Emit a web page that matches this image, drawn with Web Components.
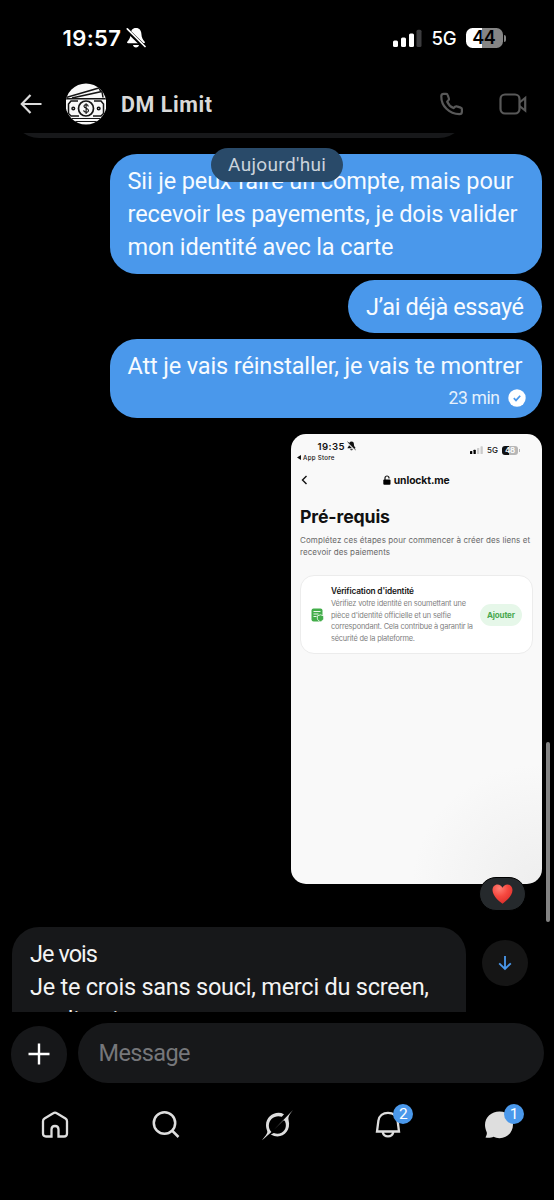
<!DOCTYPE html>
<html lang="fr">
<head>
<meta charset="utf-8">
<title>Messages</title>
<style>
html,body{margin:0;background:#000}
body{font-family:Roboto,"Noto Sans",sans-serif}
</style>
</head>
<body>
<phone-screen></phone-screen>
<script>
const define = (name, html, setup) => customElements.define(name, class extends HTMLElement {
  constructor() {
    super();
    this.attachShadow({ mode: 'open' }).innerHTML = html;
  }
  connectedCallback() { if (setup) setup(this, this.shadowRoot); }
});

/* A single line whose tracking is tuned to an advance width. */
customElements.define('fit-text', class extends HTMLElement {
  constructor() {
    super();
    this.attachShadow({ mode: 'open' }).innerHTML = `<style>:host{display:block;white-space:pre}span{display:inline-block}</style><span><slot></slot></span>`;
  }
  connectedCallback() {
    requestAnimationFrame(() => this.fit());
    this.fit();
  }
  fit() {
    const span = this.shadowRoot.querySelector('span');
    const goal = parseFloat(this.getAttribute('w'));
    const count = this.textContent.length;
    if (!goal || !count) return;
    span.style.letterSpacing = '0px';
    const natural = span.getBoundingClientRect().width;
    if (!natural) return;
    const step = (goal - natural) / (count - 1);
    span.style.letterSpacing = step + 'px';
    span.style.marginRight = -step + 'px';
  }
});

define('status-bar', `<style>
:host{display:flex;height:76px;box-sizing:border-box;align-items:center;padding:0 48.5px 0 62.500px;color:#fff;font-family:Inter,sans-serif}
.time{font-size:22px;font-weight:600;margin-top:-1px}
svg{display:block}
.bell{margin-left:5px}
.sp{flex:1}
.net{font-size:18.5px;font-weight:500;margin:0 9px 0 10px}
.bat{position:relative;width:37px;height:20px;border-radius:6.5px;background:linear-gradient(90deg,#fff 44%,#858585 44%);color:#000;font-weight:600;font-size:18px;line-height:20px;display:flex;justify-content:center;margin-top:-1px}
.nub{width:2px;height:7px;border-radius:0 3px 3px 0;background:#858585;margin-left:1px}
</style>
<fit-text class="time" w="58.5">19:57</fit-text>
<svg class="bell" width="20" height="22" viewBox="0 0 20 22"><path d="M10 1c-3.6 0-5.3 2.7-5.4 6C4.500 11 3 12.700 1.300 14.700c-.5.7-.2 1.500.8 1.500h15.800c1 0 1.300-.8.8-1.500C17 12.700 15.500 11 15.400 7 15.300 3.700 13.600 1 10 1zM7 18h6c-.3 1.600-1.400 2.500-3 2.500S7.300 19.600 7 18z" fill="#fff"/><path d="M.5 2.500 18.500 20" stroke="#000" stroke-width="4"/><path d="M1.300 1.800 19 19.500" stroke="#fff" stroke-width="1.700" stroke-linecap="round"/></svg>
<span class="sp"></span>
<svg width="29" height="19" viewBox="0 0 29 19"><g fill="#fff"><rect y="11.500" width="5" height="6.500" rx="1.500"/><rect x="8" y="8.500" width="5" height="9.500" rx="1.500"/><rect x="16" y="4.500" width="5" height="13.500" rx="1.500"/></g><rect x="23.500" y=".8" width="5" height="17.200" rx="1.500" fill="#3c3c3e"/></svg>
<fit-text class="net" w="25">5G</fit-text>
<div class="bat"><fit-text w="23.5">44</fit-text></div><div class="nub"></div>`);

define('chat-header', `<style>
:host{display:flex;height:56.5px;box-sizing:border-box;align-items:center;padding:0 27px 0 20px;color:#d9d9d9}
svg{display:block}
.av{margin-left:23.500px}
.name{font-size:21.5px;font-weight:700;margin:2px 0 0 15.500px;line-height:28px}
.sp{flex:1}
.cam{margin-left:35px}
</style>
<svg width="22" height="22" viewBox="0 0 22 22" fill="none" stroke="#dcdcdc" stroke-width="2.200"><path d="M21.500 11H2M10.500 2 1.800 11l8.700 9"/></svg>
<svg class="av" width="40" height="42" viewBox="0 0 40 42"><defs><clipPath id="c"><circle cx="20" cy="21" r="20.500"/></clipPath></defs><g clip-path="url(#c)"><rect width="40" height="42" fill="#f8f8f8"/><g fill="none" stroke="#141414" stroke-width="1.500"><path d="M0 14.500 33 5l2 4M6 15 36 8.500l1 6M0 15.800h40" /><path d="M0 35.500h40M0 38.500h40" stroke-width="1.200"/><path d="M12 18H5l-2.500 3v9.500L5 33h8M28 18h7l2.500 3v9.500L35 33h-8"/><circle cx="20" cy="25.500" r="7.500" stroke-width="1.700"/><circle cx="7.300" cy="25.500" r="1.300"/><circle cx="32.700" cy="25.500" r="1.300"/><path d="M22.300 23.500c-.3-2.600-4.600-2.300-4.300-.1.300 2.300 4.500 1.500 4.500 4 0 2.600-4.700 2.400-4.800-.1M20.100 20.200v10.800" stroke-width="1.100"/></g></g></svg>
<fit-text class="name" w="91">DM Limit</fit-text>
<span class="sp"></span>
<svg width="25" height="25" viewBox="0 0 25 25" fill="none" stroke="#585858" stroke-width="2.200" stroke-linejoin="round"><path d="M2.300 4.200C2.400 2.800 3.300 1.900 4.700 1.900h2.500c.8 0 1.300.4 1.500 1.100l1.200 3.500c.2.600 0 1.200-.4 1.600L8.200 9.700c1.300 3 3.200 5 6.300 6.400l1.700-1.400c.5-.4 1-.5 1.600-.3l3.900 1.200c.8.200 1.200.8 1.200 1.500v2.600c0 1.500-1 2.500-2.500 2.500C10.300 22 2.100 14 2.300 4.200z"/></svg>
<svg class="cam" width="28" height="22" viewBox="0 0 28 22" fill="none" stroke="#585858" stroke-width="2.200"><rect x="1.500" y="1.500" width="19" height="19" rx="4.500"/><path d="m20.500 9.500 5.700-4.500v12.500l-5.700-4.500"/></svg>`);

define('chat-bubble', `<style>
:host{display:block;box-sizing:border-box;align-self:flex-end;background:#4a98eb;color:#f7fbff;border-radius:27px;padding:11px 18px 9px;font-size:23.500px;line-height:33px;margin-bottom:6px}
:host([incoming]){align-self:flex-start;background:#17181a;color:#f3f3f3}
</style><slot></slot>`);

define('message-time', `<style>
:host{display:flex;justify-content:flex-end;align-items:center;gap:7.500px;margin-right:-1.500px;height:24px;margin-top:3px;font-size:17.500px;line-height:24px;color:#e6f1fc}
svg{display:block}
</style><fit-text w="51.5"><slot></slot></fit-text><svg width="18" height="18" viewBox="0 0 18 18"><circle cx="9" cy="9" r="8.700" fill="#fff"/><path d="m5.800 9.200 2.200 2.200 4.200-4.700" fill="none" stroke="#4a98eb" stroke-width="1.700"/></svg>`, (el, root) => {
  const t = root.querySelector('fit-text');
  t.textContent = el.textContent;
  t.fit();
});

define('identity-card', `<style>
:host{display:flex;box-sizing:border-box;width:233px;height:79px;border:1px solid #ececec;border-radius:14px;background:#fff;align-items:center;padding:1px 10px 0 10px;margin-top:17.500px}
svg{display:block}
.txt{margin-left:7px;width:149px;color:#808080;font-size:7.400px;line-height:11.700px;padding-top:1px}
.t{color:#161616;font-weight:600;font-size:8.300px}
.b{width:42px;height:22px;border-radius:11px;background:#e6f7e9;color:#49a84e;font-weight:700;font-size:8px;line-height:22px;display:flex;justify-content:center;flex:none}
</style>
<svg width="13" height="14" viewBox="0 0 13 14"><rect x=".5" y=".5" width="11" height="13" rx="2" fill="#43ad4a"/><path d="M2.500 3.500h7M2.500 6h5M2.500 8.500h3" stroke="#e9f8ea" stroke-width="1.100"/><path d="m9.500 6.800 3.200 1.100v2.300c0 1.500-1.200 2.800-3.200 3.500-2-.7-3.200-2-3.200-3.500V7.900z" fill="#43ad4a" stroke="#fff" stroke-width=".8"/></svg>
<div class="txt"><fit-text class="t" w="83">Vérification d'identité</fit-text><fit-text w="135">Vérifiez votre identité en soumettant une</fit-text><fit-text w="120">pièce d'identité officielle et un selfie</fit-text><fit-text w="142">correspondant. Cela contribue à garantir la</fit-text><fit-text w="84">sécurité de la plateforme.</fit-text></div>
<div class="b"><fit-text w="28">Ajouter</fit-text></div>`);

define('shared-screenshot', `<style>
:host{display:block;position:relative;align-self:flex-end;box-sizing:border-box;width:251.500px;height:450px;border-radius:15px;background:radial-gradient(ellipse 130px 120px at 100% 100%,#eee,#f9f9f9 100%);margin-top:10px;padding:0 9.500px;color:#111;font-family:Inter,sans-serif}
.sb{display:flex;align-items:center;height:14px;padding:5.500px 13px 0 17.500px;font-size:9.600px;font-weight:600}
svg{display:block}
.bl{margin-left:2.500px}.sp{flex:1}
.net{font-size:8px;font-weight:500;margin:8px 4px 0 4px}
.sig{margin-top:7px}
.bat{margin-top:8px;width:16px;height:9px;border-radius:3px;background:linear-gradient(90deg,#111 46%,#b7b7b7 46%);color:#fff;font-size:8px;line-height:9px;display:flex;justify-content:center}
.nub{width:1px;height:3px;background:#b7b7b7;margin:8px 0 0 .5px}
.back{font-size:6.200px;font-weight:500;line-height:9px;margin:0 0 0 -3px;display:flex;align-items:center;gap:2px}
.nav{display:grid;grid-template-columns:1fr auto 1fr;align-items:center;height:16px;margin-top:9.500px;font-size:10.300px;font-weight:700}
.site{display:flex;gap:3px;align-items:center}
.h{font-size:17.700px;font-weight:700;line-height:24px;margin-top:17px}
.p{font-size:8px;line-height:12px;color:#686868;margin-top:5px}
.react{position:absolute;right:16px;bottom:-27.500px;width:47px;height:34px;box-sizing:border-box;border:1px solid #000;border-radius:17px;background:#25292c;display:flex;align-items:center;justify-content:center}
</style>
<div class="sb"><fit-text w="27">19:35</fit-text>
<svg class="bl" width="9" height="10" viewBox="0 0 20 22"><path d="M10 1C6 1 4.600 4 4.600 7c0 4-1.600 5.700-3.300 7.700-.5.7-.2 1.500.8 1.500h15.800c1 0 1.300-.8.8-1.500C17 12.700 15.400 11 15.400 7c0-3-1.400-6-5.400-6zM7 18h6c-.3 1.600-1.400 2.500-3 2.500S7.300 19.600 7 18z" fill="#111"/><path d="M.5 3 18 20.500" stroke="#f9f9f9" stroke-width="3"/><path d="M1.300 1.800 19 19.500" stroke="#111" stroke-width="2"/></svg><span class="sp"></span>
<svg class="sig" width="13" height="8" viewBox="0 0 13 8"><rect y="5" width="2.300" height="3" rx=".6"/><rect x="3.500" y="3.700" width="2.300" height="4.300" rx=".6"/><g fill="#cbcbcb"><rect x="7" y="2" width="2.300" height="6" rx=".6"/><rect x="10.500" y=".3" width="2.300" height="7.700" rx=".6"/></g></svg>
<fit-text class="net" w="11">5G</fit-text><div class="bat"><fit-text w="10">48</fit-text></div><div class="nub"></div></div>
<div class="back"><svg width="4" height="5" viewBox="0 0 4 5"><path d="M4 0v5L0 2.500z" fill="#111"/></svg><fit-text w="31.500">App Store</fit-text></div>
<div class="nav"><svg width="8" height="10" viewBox="0 0 8 10"><path d="M6.500 1 2.500 5l4 4" fill="none" stroke="#111" stroke-width="1.400"/></svg>
<div class="site"><svg width="8" height="10" viewBox="0 0 8 10"><rect x=".3" y="4.500" width="7.200" height="5.200" rx="1"/><path d="M2 5V3a2 2 0 0 1 4 0v.5" fill="none" stroke="#111" stroke-width="1.200"/></svg><fit-text w="56">unlockt.me</fit-text></div></div>
<fit-text class="h" w="90">Pré-requis</fit-text>
<div class="p"><fit-text w="230">Complétez ces étapes pour commencer à créer des liens et</fit-text><fit-text w="90">recevoir des paiements</fit-text></div>
<identity-card></identity-card>
<div class="react"><svg width="21" height="20" viewBox="0 0 21 20"><defs><radialGradient id="h" cx=".35" cy=".2" r=".85"><stop offset="0" stop-color="#ff8075"/><stop offset=".5" stop-color="#f5483f"/><stop offset="1" stop-color="#d92d2a"/></radialGradient></defs><path d="M10.500 19.700C6.500 17 .5 11.500.5 6c0-3.400 2.300-5.600 5-5.600 2.300 0 4.100 1.300 5 3.300.9-2 2.700-3.300 5-3.300 2.700 0 5 2.200 5 5.600 0 5.500-6 11-10 13.700z" fill="url(#h)"/></svg></div>`);

define('message-list', `<style>
:host{display:flex;flex-direction:column;position:relative;height:879.500px;box-sizing:border-box;overflow:hidden;padding:0 12px}
.prev{flex:none;width:454px;height:60px;margin-top:-54.500px;margin-bottom:16px}
.day{position:absolute;left:211px;top:15.500px;width:132px;height:33.500px;border-radius:17px;background:#294a69;color:#cbd3dc;font-size:19px;line-height:34px;display:flex;justify-content:center}
.a{width:432.500px;height:119.500px}.b{width:194px;height:53.500px}.c{width:432.500px;height:78.500px}
.in{flex:none;width:454px;margin-top:43.500px}
.down{position:absolute;left:482px;top:807.500px;width:46px;height:46px;border-radius:50%;background:#151515;display:grid;place-items:center}
.bar{position:absolute;left:546px;top:609px;width:4px;height:180px;border-radius:2px;background:#838383}
chat-bubble,shared-screenshot{flex:none}
</style>
<chat-bubble incoming class="prev"></chat-bubble>
<chat-bubble class="a"><fit-text w="386">Sii je peux faire un compte, mais pour</fit-text><fit-text w="390">recevoir les payements, je dois valider</fit-text><fit-text w="266">mon identité avec la carte</fit-text></chat-bubble>
<chat-bubble class="b"><fit-text w="158">J’ai déjà essayé</fit-text></chat-bubble>
<chat-bubble class="c"><fit-text w="395">Att je vais réinstaller, je vais te montrer</fit-text><message-time>23 min</message-time></chat-bubble>
<shared-screenshot></shared-screenshot>
<chat-bubble incoming class="in"><fit-text w="68">Je vois</fit-text><fit-text w="399">Je te crois sans souci, merci du screen,</fit-text><fit-text w="127">explications</fit-text></chat-bubble>
<div class="day"><fit-text w="98">Aujourd'hui</fit-text></div>
<div class="down"><svg width="14" height="16" viewBox="0 0 14 16" fill="none" stroke="#4a98eb" stroke-width="1.800"><path d="M7 1v13.500M1.200 8.300 7 14l5.800-5.700"/></svg></div>
<div class="bar"></div>`);

define('message-composer', `<style>
:host{display:flex;align-items:flex-end;gap:10.500px;padding:11px 10.500px 0 10.500px;height:70.500px;box-sizing:border-box}
.plus{width:56.500px;height:56.500px;border-radius:50%;background:#161719;display:grid;place-items:center}
.field{flex:1;height:60px;border-radius:30px;background:#17181a;color:#76777a;font-size:23.500px;line-height:60px;padding-left:21px}
svg{display:block}
</style><div class="plus"><svg width="22" height="22" viewBox="0 0 22 22"><path d="M11 .5v21M.5 11h21" stroke="#fff" stroke-width="2.400"/></svg></div><div class="field"><fit-text w="92">Message</fit-text></div>`);

define('tab-icon', `<style>
:host{display:block;position:relative;width:30px;height:30px}
.n{position:absolute;left:20.500px;top:-6px;width:20px;height:20px;border-radius:50%;background:#4a98eb;color:#fff;font-size:15.500px;line-height:21px;text-align:center}
.n:empty{display:none}
</style><slot></slot><span class="n"></span>`, (el, root) => { root.querySelector('.n').textContent = el.getAttribute('count') || ''; });

define('tab-bar', `<style>
:host{display:grid;grid-template-columns:repeat(5,1fr);justify-items:center;padding-top:27px;height:117.500px;box-sizing:border-box}
svg{display:block}
</style>
<tab-icon><svg width="30" height="30" viewBox="0 0 30 30" fill="none" stroke="#dedede" stroke-width="2.300"><path d="M3 11.200c0-1.200.5-2 1.500-2.600l8.700-5.400c1.200-.8 2.400-.8 3.600 0l8.700 5.400c1 .6 1.500 1.400 1.500 2.600v12.300c0 2-1 3-3 3h-5.500v-7c0-4.700-7-4.700-7 0v7H6c-2 0-3-1-3-3z"/></svg></tab-icon>
<tab-icon><svg width="30" height="30" viewBox="0 0 30 30" fill="none" stroke="#dedede" stroke-width="2.500"><circle cx="13.500" cy="13" r="10.700"/><path d="m21 20.500 6.500 6.500"/></svg></tab-icon>
<tab-icon><svg width="32" height="32" viewBox="0 0 32 32" fill="#dedede"><path d="M22 4.200C14 0 4 6 4 15.300c0 3 1 4.700 1.300 6.200C5.700 23.500 2.500 27 0 30.300c3.200-3 6.700-5.800 9.400-8.400C6 18.500 6 12.600 9.500 9c3.100-3.100 7.300-3.300 10.300-2.200z"/><path d="M12.200 19.500 31 0c-2.600 3.600-5.300 6.200-4.400 10.300 3 12-8.100 20-17.800 14.200l3-1.500c7.600 3.100 14.500-4 11.300-11.500-.5-1.200-1.500-1.100-2.300-.5z"/></svg></tab-icon>
<tab-icon count="2"><svg width="30" height="30" viewBox="0 0 30 30" fill="none" stroke="#dedede" stroke-width="2.300"><path d="M4 21.500h22l-1.400-10.800C23.900 5.700 20 2.900 15 2.900s-8.900 2.800-9.600 7.800zM9.800 22.500c1.300 5.200 9.100 5.200 10.400 0"/></svg></tab-icon>
<tab-icon count="1"><svg width="30" height="30" viewBox="0 0 30 30" fill="#dedede"><path d="M15.500 1.500c8 0 13.500 5.500 13.500 13s-5.500 13.700-13.500 13.700c-2.300 0-4.300-.9-6-1.500-1.900.8-4.800 1.300-8 .7.9-1.600 1.600-3 1.300-5C2 20 1 18 1 15 1 7.200 7.500 1.500 15.500 1.500z"/></svg></tab-icon>`);

define('phone-screen', `<style>
:host{display:flex;flex-direction:column;width:554px;height:1200px;overflow:hidden;background:#000}
status-bar,chat-header,message-list,message-composer,tab-bar{flex:none}
</style><status-bar></status-bar><chat-header></chat-header><message-list></message-list><message-composer></message-composer><tab-bar></tab-bar>`);
</script>
</body>
</html>
